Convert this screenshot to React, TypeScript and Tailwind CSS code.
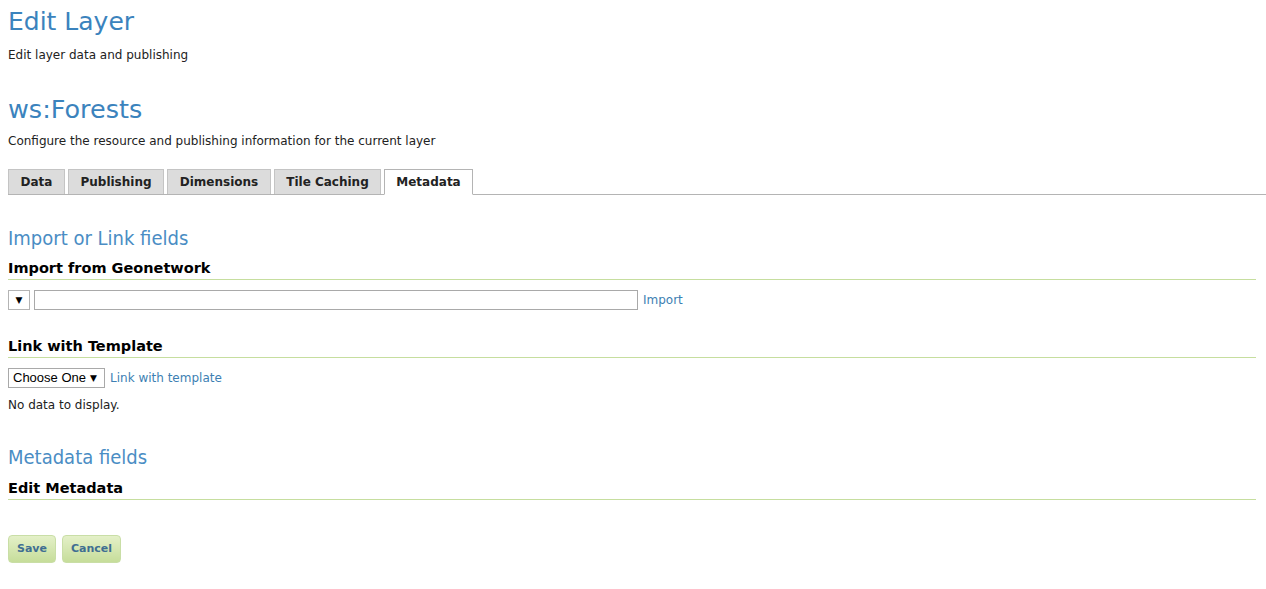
const TABS = [
  { label: "Data", w: "w-[57px]" },
  { label: "Publishing", w: "w-[96px]" },
  { label: "Dimensions", w: "w-[104px]" },
  { label: "Tile Caching", w: "w-[107px]" },
  { label: "Metadata", w: "w-[89px]" },
];

function SectionTitle({ children }: { children: React.ReactNode }) {
  return (
    <h3 className="text-[20px] leading-[24px] text-[#4a8dc4] [font-stretch:condensed]">
      {children}
    </h3>
  );
}

function FieldsetLegend({ children }: { children: React.ReactNode }) {
  return (
    <div className="mr-[2px]">
      <div className="pb-[1px] text-[14.5px] font-bold leading-[20px] text-black">{children}</div>
      <div className="h-px bg-[#c6de9f]" />
    </div>
  );
}

function Arrow() {
  return <span className="text-[9px] leading-none">▼</span>;
}

export default function App() {
  return (
    <div className="min-h-[589px] bg-white px-2 font-['DejaVu_Sans',Verdana,sans-serif] text-[12px] text-[#222]">
      <h1 className="pt-[6px] text-[25px] leading-[32px] text-[#3b83bd]">Edit Layer</h1>
      <p className="mt-[9px] leading-[16px]">Edit layer data and publishing</p>

      <h2 className="mt-[30px] text-[25.5px] leading-[32px] text-[#3b83bd]">ws:Forests</h2>
      <p className="mt-[8px] leading-[16px]">
        Configure the resource and publishing information for the current layer
      </p>

      <div className="-mr-[8px] mt-[20px] flex gap-[3px] border-b border-[#b4b4b4]">
        {TABS.map((t) => (
          <div
            key={t.label}
            className={
              t.label === "Metadata"
                ? `${t.w} -mb-px border border-b-white border-[#b4b4b4] bg-white pb-[4px] pt-[5px] text-center text-[12px] font-bold leading-[15px] text-[#222]`
                : `${t.w} border border-b-0 border-[#c4c4c4] bg-[#dcdcdc] pb-[4px] pt-[5px] text-center text-[12px] font-bold leading-[15px] text-[#222]`
            }
          >
            {t.label}
          </div>
        ))}
      </div>

      <div className="mt-[31px]">
        <SectionTitle>Import or Link fields</SectionTitle>
        <div className="mt-[8px]">
          <FieldsetLegend>Import from Geonetwork</FieldsetLegend>
        </div>
        <div className="mt-[10px] flex items-center gap-[4px]">
          <div className="flex h-[20px] w-[22px] items-center justify-center border border-[#b4b4b4] bg-white text-black">
            <Arrow />
          </div>
          <div className="h-[20px] w-[604px] border border-[#a9a9a9] bg-white" />
          <a className="ml-[1px] text-[12px] text-[#3d7fb3]">Import</a>
        </div>

        <div className="mt-[26px]">
          <FieldsetLegend>Link with Template</FieldsetLegend>
        </div>
        <div className="mt-[10px] flex items-center gap-[5px]">
          <div className="flex h-[20px] w-[97px] items-center gap-[4px] border border-[#a9a9a9] bg-white px-[4px] text-[13px] text-black">
            <span className="font-['Liberation_Sans',Arial,sans-serif]">Choose One</span>
            <Arrow />
          </div>
          <a className="text-[12px] text-[#3d7fb3]">Link with template</a>
        </div>
        <p className="mt-[9px] leading-[16px]">No data to display.</p>

        <div className="mt-[32px]">
          <SectionTitle>Metadata fields</SectionTitle>
        </div>
        <div className="mt-[9px]">
          <FieldsetLegend>Edit Metadata</FieldsetLegend>
        </div>

        <div className="mt-[35px] flex gap-[6px]">
          <button className="h-[28px] rounded-[4px] border border-[#c9dea6] bg-gradient-to-b from-[#e4f0c8] to-[#c6dd9a] px-[8px] text-[11px] font-bold text-[#3f6e92]">
            Save
          </button>
          <button className="h-[28px] rounded-[4px] border border-[#c9dea6] bg-gradient-to-b from-[#e4f0c8] to-[#c6dd9a] px-[8px] text-[11px] font-bold text-[#3f6e92]">
            Cancel
          </button>
        </div>
      </div>
    </div>
  );
}
